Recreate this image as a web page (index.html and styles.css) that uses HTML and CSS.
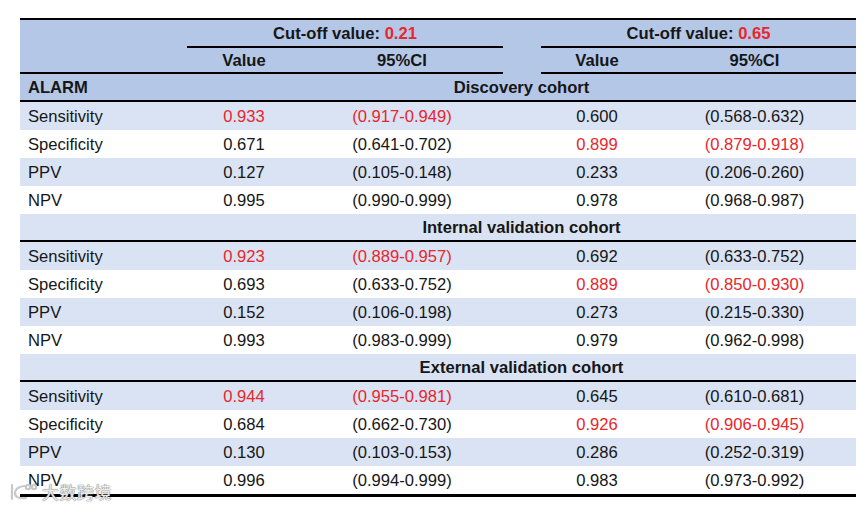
FILE: index.html
```html
<!DOCTYPE html>
<html lang="en">
<head>
<meta charset="utf-8">
<title>ALARM cut-off performance</title>
<link rel="stylesheet" href="styles.css">
</head>
<body>
<div class="page">
  <div class="table">
    <div class="head">
      <div class="h-label"></div>
      <div class="h-cut h-cut1">Cut-off value: <span class="red">0.21</span></div>
      <div class="h-gap"></div>
      <div class="h-cut h-cut2">Cut-off value: <span class="red">0.65</span></div>
      <div class="h-sub h-v1">Value</div>
      <div class="h-sub h-c1">95%CI</div>
      <div class="h-sub h-v2">Value</div>
      <div class="h-sub h-c2">95%CI</div>
    </div>

    <div class="row sec dark">
      <div class="lbl b">ALARM</div>
      <div class="sec-title">Discovery cohort</div>
    </div>
    <div class="row alt">
      <div class="lbl">Sensitivity</div><div class="red">0.933</div><div class="red">(0.917-0.949)</div><div></div><div>0.600</div><div>(0.568-0.632)</div>
    </div>
    <div class="row">
      <div class="lbl">Specificity</div><div>0.671</div><div>(0.641-0.702)</div><div></div><div class="red">0.899</div><div class="red">(0.879-0.918)</div>
    </div>
    <div class="row alt">
      <div class="lbl">PPV</div><div>0.127</div><div>(0.105-0.148)</div><div></div><div>0.233</div><div>(0.206-0.260)</div>
    </div>
    <div class="row">
      <div class="lbl">NPV</div><div>0.995</div><div>(0.990-0.999)</div><div></div><div>0.978</div><div>(0.968-0.987)</div>
    </div>

    <div class="row sec light">
      <div class="lbl"></div>
      <div class="sec-title">Internal validation cohort</div>
    </div>
    <div class="row alt">
      <div class="lbl">Sensitivity</div><div class="red">0.923</div><div class="red">(0.889-0.957)</div><div></div><div>0.692</div><div>(0.633-0.752)</div>
    </div>
    <div class="row">
      <div class="lbl">Specificity</div><div>0.693</div><div>(0.633-0.752)</div><div></div><div class="red">0.889</div><div class="red">(0.850-0.930)</div>
    </div>
    <div class="row alt">
      <div class="lbl">PPV</div><div>0.152</div><div>(0.106-0.198)</div><div></div><div>0.273</div><div>(0.215-0.330)</div>
    </div>
    <div class="row">
      <div class="lbl">NPV</div><div>0.993</div><div>(0.983-0.999)</div><div></div><div>0.979</div><div>(0.962-0.998)</div>
    </div>

    <div class="row sec light">
      <div class="lbl"></div>
      <div class="sec-title">External validation cohort</div>
    </div>
    <div class="row alt">
      <div class="lbl">Sensitivity</div><div class="red">0.944</div><div class="red">(0.955-0.981)</div><div></div><div>0.645</div><div>(0.610-0.681)</div>
    </div>
    <div class="row">
      <div class="lbl">Specificity</div><div>0.684</div><div>(0.662-0.730)</div><div></div><div class="red">0.926</div><div class="red">(0.906-0.945)</div>
    </div>
    <div class="row alt">
      <div class="lbl">PPV</div><div>0.130</div><div>(0.103-0.153)</div><div></div><div>0.286</div><div>(0.252-0.319)</div>
    </div>
    <div class="row">
      <div class="lbl">NPV</div><div>0.996</div><div>(0.994-0.999)</div><div></div><div>0.983</div><div>(0.973-0.992)</div>
    </div>
  </div>

  <div class="watermark">
    <svg class="wm-logo" width="30" height="20" viewBox="0 0 30 20">
      <path d="M3 3 L3 17" />
      <path d="M16 4 C9 4 6 8 6 11 C6 15 10 17 17 16" />
      <circle cx="19" cy="5" r="2.2" />
      <circle cx="25" cy="5" r="2.2" />
    </svg>
    <span class="wm-text">大数跨境</span>
  </div>
</div>
</body>
</html>
```

FILE: styles.css
```css
html, body {
  margin: 0;
  padding: 0;
  background: #ffffff;
}

body {
  font-family: "Liberation Sans", Arial, sans-serif;
  font-size: 16.6px;
  color: #161616;
}

.page {
  position: relative;
  width: 865px;
  height: 513px;
  padding: 18px 0 0 20px;
  box-sizing: border-box;
}

.table {
  width: 836px;
  border-top: 2px solid #000;
  border-bottom: 3px solid #000;
}

.head,
.row {
  display: grid;
  grid-template-columns: 167px 114px 202px 38px 112px 203px;
}

.head {
  background: #b4c7e7;
  font-weight: bold;
  text-align: center;
}

.h-label {
  grid-column: 1;
  grid-row: 1 / span 2;
  border-bottom: 2px solid #000;
}

.h-gap {
  grid-column: 4;
  grid-row: 1 / span 2;
}

.h-cut {
  grid-row: 1;
  height: 28px;
  padding-top: 1px;
  line-height: 25px;
  box-sizing: border-box;
  border-bottom: 2px solid #000;
}

.h-cut1 { grid-column: 2 / span 2; }
.h-cut2 { grid-column: 5 / span 2; }

.h-sub {
  grid-row: 2;
  height: 26px;
  padding-top: 2px;
  line-height: 22px;
  box-sizing: border-box;
  border-bottom: 2px solid #000;
}

.h-v1 { grid-column: 2; }
.h-c1 { grid-column: 3; }
.h-v2 { grid-column: 5; }
.h-c2 { grid-column: 6; }

.row {
  height: 28px;
  padding-top: 2px;
  line-height: 26px;
  box-sizing: border-box;
  text-align: center;
  background: #ffffff;
}

.row.alt {
  background: #dae3f3;
}

.row .lbl {
  text-align: left;
  padding-left: 8px;
}

.row.sec {
  line-height: 24px;
  border-bottom: 2px solid #000;
  font-weight: bold;
}

.row.sec.dark { background: #b4c7e7; }
.row.sec.light { background: #dae3f3; }

.sec-title {
  grid-column: 2 / span 5;
  text-align: center;
}

.b { font-weight: bold; }

.red { color: #e8262b; }

.watermark {
  position: absolute;
  left: 9px;
  top: 482px;
  display: flex;
  align-items: center;
  gap: 3px;
  pointer-events: none;
}

.wm-logo path,
.wm-logo circle {
  fill: none;
  stroke: #c8c8c8;
  stroke-width: 2.2;
  stroke-linecap: round;
}

.wm-text {
  font-family: "Noto Sans CJK SC", sans-serif;
  font-size: 17px;
  line-height: 20px;
  color: rgba(255, 255, 255, 0.85);
  text-shadow: 0 0 1px #8a8a8a, 0 0 1px #8a8a8a, 0 0 1px #8a8a8a;
  letter-spacing: 0.5px;
}
```
